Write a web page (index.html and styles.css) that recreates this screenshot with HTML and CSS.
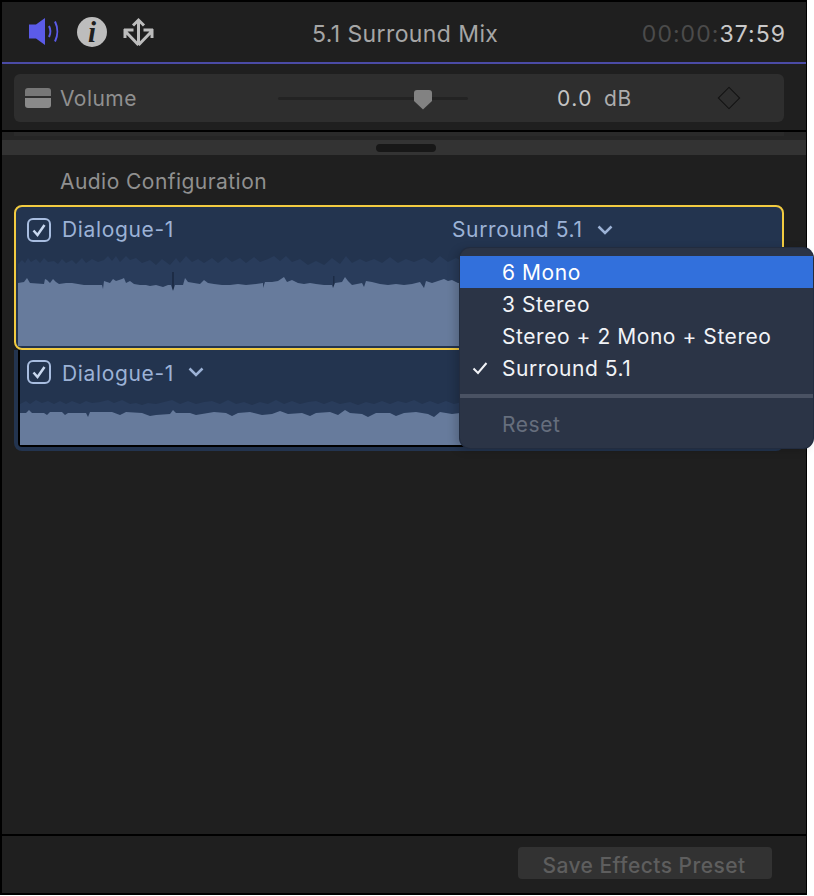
FILE: index.html
```html
<!DOCTYPE html>
<html lang="en">

<head>
    <meta charset="UTF-8" />
    <meta name="viewport" content="width=device-width, initial-scale=1.0" />
    <title>Audio Inspector</title>
    <link rel="stylesheet" href="styles.css">
</head>

<body>
    <div class="panel">
        <header class="topBar">
            <div class="tabs">
                <svg class="tabIcon speaker" width="32" height="32" viewBox="0 0 32 32">
                    <path class="speakerBody" d="M1 8.500h7L17 2v27l-9-6.500H1z" />
                    <path class="speakerWave" d="M21 10c1.800 3.500 1.800 7.500 0 11" />
                    <path class="speakerWave" d="M27 5.500c3 6 3 14 0 20" />
                </svg>
                <span class="infoIcon">i</span>
                <svg class="tabIcon" width="33" height="30" viewBox="0 0 33 30">
                    <path class="shareLines" d="M16.500 28V3M11 8.500L16.500 3 22 8.500M16.500 28L3 14M16.500 28L30 14M2 13h9.500M3 12v9M31 13h-9.500M30 12v9" />
                </svg>
            </div>
            <div class="clipTitle">5.1 Surround Mix</div>
            <div class="timecode"><span class="timeDim">00:00:</span>37:59</div>
        </header>

        <section class="volumeArea">
            <div class="volumeRow">
                <span class="volumeIcon"></span>
                <span class="volumeLabel">Volume</span>
                <div class="slider"><span class="sliderThumb"></span></div>
                <span class="volumeValue">0.0</span>
                <span class="volumeUnit">dB</span>
                <span class="keyframe"></span>
            </div>
        </section>
        <div class="peekRow"></div>
        <div class="divider"><span class="grabber"></span></div>

        <main class="content">
            <h2 class="sectionTitle">Audio Configuration</h2>

            <div class="clip clipSelected">
                <div class="clipHead">
                    <svg class="checkbox" width="24" height="24" viewBox="0 0 24 24">
                        <rect x="1" y="1" width="22" height="22" rx="5" />
                        <path d="M6.500 12.500l4 4.500 7-10" />
                    </svg>
                    <span class="clipName clipNameWide">Dialogue-1</span>
                    <span class="clipName">Surround 5.1</span>
                    <svg class="chevron" width="16" height="10" viewBox="0 0 16 10"><path d="M1.500 1.500l6.500 6.500 6.500-6.500" /></svg>
                </div>
                <svg class="wave waveOne" viewBox="18 255 763 91" preserveAspectRatio="none">
                    <path class="waveBack" d="M18 300V264L22 260 25 263 28 258 31 262 36 259 40 263 44 258 48 262 54 261 58 264 62 259 66 263 72 260 76 264 82 258 86 263 92 259 98 262 104 260 108 256 112 261 116 256 120 262 126 256 130 260 136 258 142 263 150 260 156 265 162 259 170 265 176 258 180 263 186 256 192 262 198 259 204 263 212 258 218 263 226 257 232 262 240 258 246 263 254 257 260 262 268 259 274 256 280 261 286 256 292 262 300 259 308 265 316 261 324 265 332 258 340 264 346 256 352 263 360 259 366 262 374 259 382 263 390 257 398 263 406 259 414 262 424 258 432 263 440 256 448 262 456 258 464 262 781 262V300z" />
                    <path class="waveDip" d="M172 272h2v18h-2zM333 276h1.500v12h-1.500z" />
                    <path class="waveFill" d="M18 346V283L24 282 27 278 30 283 44 284 45 279 47 280 50 283 53 279 56 282 59 284 66 283 72 283 78 284 84 285 92 285 102 285 103 289 104 281 110 283 113 279 116 281 122 279 124 278 126 283 130 281 134 284 140 285 146 285 150 286 156 285 163 287 168 285 171 285 173 291 175 285 183 285 185 278 188 282 200 284 204 280 208 283 214 284 222 285 230 285 238 284 246 285 256 284 263 283 263 288 265 282 272 282 278 281 284 277 287 282 292 280 298 283 304 284 310 283 316 284 324 285 332 285 333 288 335 283 342 282 345 277 348 281 352 285 362 283 364 287 366 281 372 282 380 284 388 285 396 284 404 285 412 284 420 282 424 288 426 281 432 283 444 279 448 281 452 280 458 283 781 283V346z" />
                </svg>
            </div>

            <div class="clip clipPlain">
                <div class="clipInner">
                    <div class="clipHead">
                        <svg class="checkbox" width="24" height="24" viewBox="0 0 24 24">
                            <rect x="1" y="1" width="22" height="22" rx="5" />
                            <path d="M6.500 12.500l4 4.500 7-10" />
                        </svg>
                        <span class="clipName">Dialogue-1</span>
                        <svg class="chevron" width="16" height="10" viewBox="0 0 16 10"><path d="M1.500 1.500l6.500 6.500 6.500-6.500" /></svg>
                    </div>
                    <svg class="wave waveTwo" viewBox="20 394 761 51" preserveAspectRatio="none">
                        <path class="waveBack" d="M20 425V404L26 401 30 404 36 400 42 403 48 401 54 404 60 401 66 404 72 401 80 404 86 401 92 403 100 402 108 400 114 403 122 400 130 404 136 403 142 405 148 403 156 404 164 402 172 400 180 404 188 401 196 404 204 402 212 401 220 404 228 400 236 404 244 402 252 405 260 402 268 404 276 400 284 404 292 401 300 404 308 402 316 401 324 404 332 401 340 404 350 402 358 405 366 402 374 404 382 401 390 404 398 401 406 403 414 400 422 404 430 401 438 404 446 401 454 404 462 402 781 404V425z" />
                        <path class="waveFill" d="M20 445V413L26 413 29 410 32 413 44 413 47 415 50 412 62 412 65 415 68 413 86 413 88 417 90 412 104 412 112 412 120 415 126 412 142 413 150 416 156 415 170 414 173 410 176 413 190 413 196 415 202 414 214 412 226 413 232 416 238 413 250 412 262 415 272 414 280 411 288 414 302 413 310 416 316 413 330 412 338 415 345 410 350 413 362 414 368 417 376 413 390 413 396 416 404 413 416 412 428 414 434 417 440 412 452 414 460 413 781 413V445z" />
                    </svg>
                </div>
            </div>

            <div class="menu">
                <div class="menuItem menuItemActive">6 Mono</div>
                <div class="menuItem">3 Stereo</div>
                <div class="menuItem">Stereo + 2 Mono + Stereo</div>
                <div class="menuItem menuItemChecked">
                    <svg class="menuCheck" width="16" height="14" viewBox="0 0 16 14"><path d="M1.500 7.500l4.500 4.500 8.500-10" /></svg>
                    Surround 5.1
                </div>
                <div class="menuSeparator"></div>
                <div class="menuItem menuItemDisabled">Reset</div>
            </div>
        </main>

        <footer class="bottomBar">
            <button type="button" class="saveButton">Save Effects Preset</button>
        </footer>
    </div>
</body>

</html>
```

FILE: styles.css
```css
:root {
    --panel-bg: #1f1f1f;
    --clip-bg: #23344f;
    --clip-text: #9cb2d6;
    --wave-back: #293c5b;
    --wave-fill: #677b9c;
    --selected: #f2cb41;
}

html,
body {
    margin: 0;
    background: #ffffff;
}

body {
    font-family: Inter, "Noto Sans", sans-serif;
    font-size: 21px;
    letter-spacing: 0.45px;
}

.panel {
    position: relative;
    box-sizing: border-box;
    display: flex;
    flex-direction: column;
    width: 807px;
    height: 895px;
    background: var(--panel-bg);
    border: 2px solid #000;
    border-right-width: 1px;
}

.topBar {
    display: flex;
    align-items: center;
    flex: none;
    height: 62px;
    box-sizing: border-box;
    padding: 0 20px 0 25px;
    border-bottom: 2px solid #4b4ba6;
}

.tabs {
    display: flex;
    align-items: center;
    width: 285px;
}

.tabIcon {
    flex: none;
}

.speaker {
    margin-left: 1px;
}

.speakerBody {
    fill: #5b5be8;
}

.speakerWave {
    fill: none;
    stroke: #5b5be8;
    stroke-width: 2;
}

.infoIcon {
    display: flex;
    align-items: center;
    justify-content: center;
    flex: none;
    width: 30px;
    height: 30px;
    margin-left: 17px;
    border-radius: 50%;
    background: #bdbdbd;
    color: #1f1f1f;
    font-family: "Liberation Serif", serif;
    font-size: 29px;
    font-style: italic;
    font-weight: bold;
    letter-spacing: 0;
}

.tabIcon:last-child {
    margin-left: 15px;
}

.shareLines {
    fill: none;
    stroke: #bdbdbd;
    stroke-width: 3;
}

.clipTitle {
    margin-top: 3px;
    color: #a6a6a6;
    font-size: 23px;
    letter-spacing: 0.4px;
}

.timecode {
    margin: 3px 0 0 auto;
    color: #c9c9c9;
    font-size: 23px;
    letter-spacing: 1.05px;
}

.timeDim {
    color: #4b4b4b;
}

.volumeArea {
    flex: none;
    height: 68px;
    box-sizing: border-box;
    padding: 10px 22px 0 12px;
    border-bottom: 2px solid #000;
}

.volumeRow {
    display: flex;
    align-items: center;
    height: 48px;
    box-sizing: border-box;
    padding-left: 11px;
    border-radius: 6px;
    background: #2e2e2e;
}

.volumeIcon {
    flex: none;
    width: 26px;
    height: 20px;
    border-radius: 3px;
    background: linear-gradient(#777 0 8px, #2e2e2e 8px 10px, #8a8a8a 10px);
}

.volumeLabel {
    width: 218px;
    margin-left: 9px;
    color: #909090;
}

.slider {
    position: relative;
    flex: none;
    width: 190px;
    height: 3px;
    border-radius: 2px;
    background: #232323;
}

.sliderThumb {
    position: absolute;
    left: 136px;
    top: -7px;
    width: 18px;
    height: 20px;
    background: #828282;
    border-radius: 3px 3px 0 0;
    clip-path: polygon(0 0, 100% 0, 100% 58%, 50% 100%, 0 58%);
}

.volumeValue {
    width: 46px;
    margin-left: 89px;
    color: #c4c4c4;
    letter-spacing: 1.5px;
}

.volumeUnit {
    margin-left: 1px;
    color: #adadad;
    letter-spacing: 0.7px;
}

.keyframe {
    flex: none;
    width: 14px;
    height: 14px;
    margin-left: 89px;
    border: 1.500px solid #111;
    transform: rotate(45deg);
}

.peekRow {
    flex: none;
    height: 8px;
    background: linear-gradient(#2a2a2a, #2a2a2a) 12px 0 / 770px 4px no-repeat, #252525;
}

.divider {
    display: flex;
    align-items: center;
    justify-content: center;
    flex: none;
    height: 15px;
    box-sizing: border-box;
    background: #333;
}

.grabber {
    width: 60px;
    height: 8px;
    margin-left: 3px;
    border-radius: 4px;
    background: #171717;
}

.content {
    position: relative;
    flex: 1;
    padding: 0 22px 0 12px;
}

.sectionTitle {
    margin: 0;
    padding: 15px 0 11px 46px;
    color: #909090;
    font-size: 21px;
    font-weight: normal;
    line-height: 24px;
}

.clip {
    box-sizing: border-box;
    background: var(--clip-bg);
}

.clipSelected {
    position: relative;
    z-index: 1;
    height: 145px;
    border: 2px solid var(--selected);
    border-radius: 8px;
}

.clipHead {
    display: flex;
    align-items: center;
    height: 46px;
    box-sizing: border-box;
    padding-left: 11px;
    color: var(--clip-text);
}

.checkbox {
    flex: none;
    margin-right: 11px;
}

.checkbox rect,
.checkbox path {
    fill: none;
    stroke: #a8bde0;
    stroke-width: 2;
}

.checkbox path {
    stroke: #c9d8ef;
    stroke-width: 2.500;
}

.clipName {
    flex: none;
    margin-bottom: 2px;
    letter-spacing: 0.65px;
}

.clipNameWide {
    width: 390px;
}

.chevron {
    flex: none;
    margin-left: 14px;
}

.chevron path {
    fill: none;
    stroke: var(--clip-text);
    stroke-width: 2.500;
}

.wave {
    display: block;
}

.waveOne {
    width: 763px;
    height: 91px;
    margin: 2px 0 0 2px;
}

.waveBack {
    fill: var(--wave-back);
    filter: blur(0.6px);
}

.waveDip {
    fill: #1d2c46;
}

.waveFill {
    fill: var(--wave-fill);
}

.clipPlain {
    height: 101px;
    padding: 0 3px 4px 4px;
    border-radius: 0 0 8px 8px;
}

.clipInner {
    height: 97px;
    box-sizing: border-box;
    border-left: 2px solid #000;
    border-bottom: 2px solid #000;
    border-radius: 0 0 0 4px;
}

.clipInner .clipHead {
    height: 44px;
    padding-left: 7px;
}

.clipInner .clipName {
    margin: 2px 0 0;
}

.waveTwo {
    width: 761px;
    height: 51px;
}

.menu {
    position: absolute;
    z-index: 2;
    left: 458px;
    top: 93px;
    box-sizing: border-box;
    width: 353px;
    height: 200px;
    padding: 8px 0;
    border-radius: 10px;
    background: #2b3446;
    box-shadow: 0 0 0 1px #222c3f, -4px 2px 10px rgba(0, 0, 0, 0.2);
    color: #f1f3f7;
    letter-spacing: 0.55px;
}

.menuItem {
    position: relative;
    height: 32px;
    padding-left: 42px;
    line-height: 34px;
}

.menuItemActive {
    background: #3270dc;
    color: #fff;
}

.menuCheck {
    position: absolute;
    left: 12px;
    top: 9px;
}

.menuCheck path {
    fill: none;
    stroke: #f1f3f7;
    stroke-width: 2;
}

.menuSeparator {
    height: 4px;
    margin: 10px 0;
    background: #4a5263;
}

.menuItemDisabled {
    color: #666e7d;
}

.bottomBar {
    display: flex;
    align-items: center;
    justify-content: flex-end;
    flex: none;
    height: 59px;
    box-sizing: border-box;
    padding: 0 34px 3px 0;
    border-top: 2px solid #000;
}

.saveButton {
    width: 254px;
    height: 32px;
    padding: 5px 2px 0 0;
    border: none;
    border-radius: 4px;
    background: #323232;
    color: #5e5e5e;
    font-family: inherit;
    font-size: 21px;
    font-weight: 500;
    letter-spacing: 0.45px;
}
```
